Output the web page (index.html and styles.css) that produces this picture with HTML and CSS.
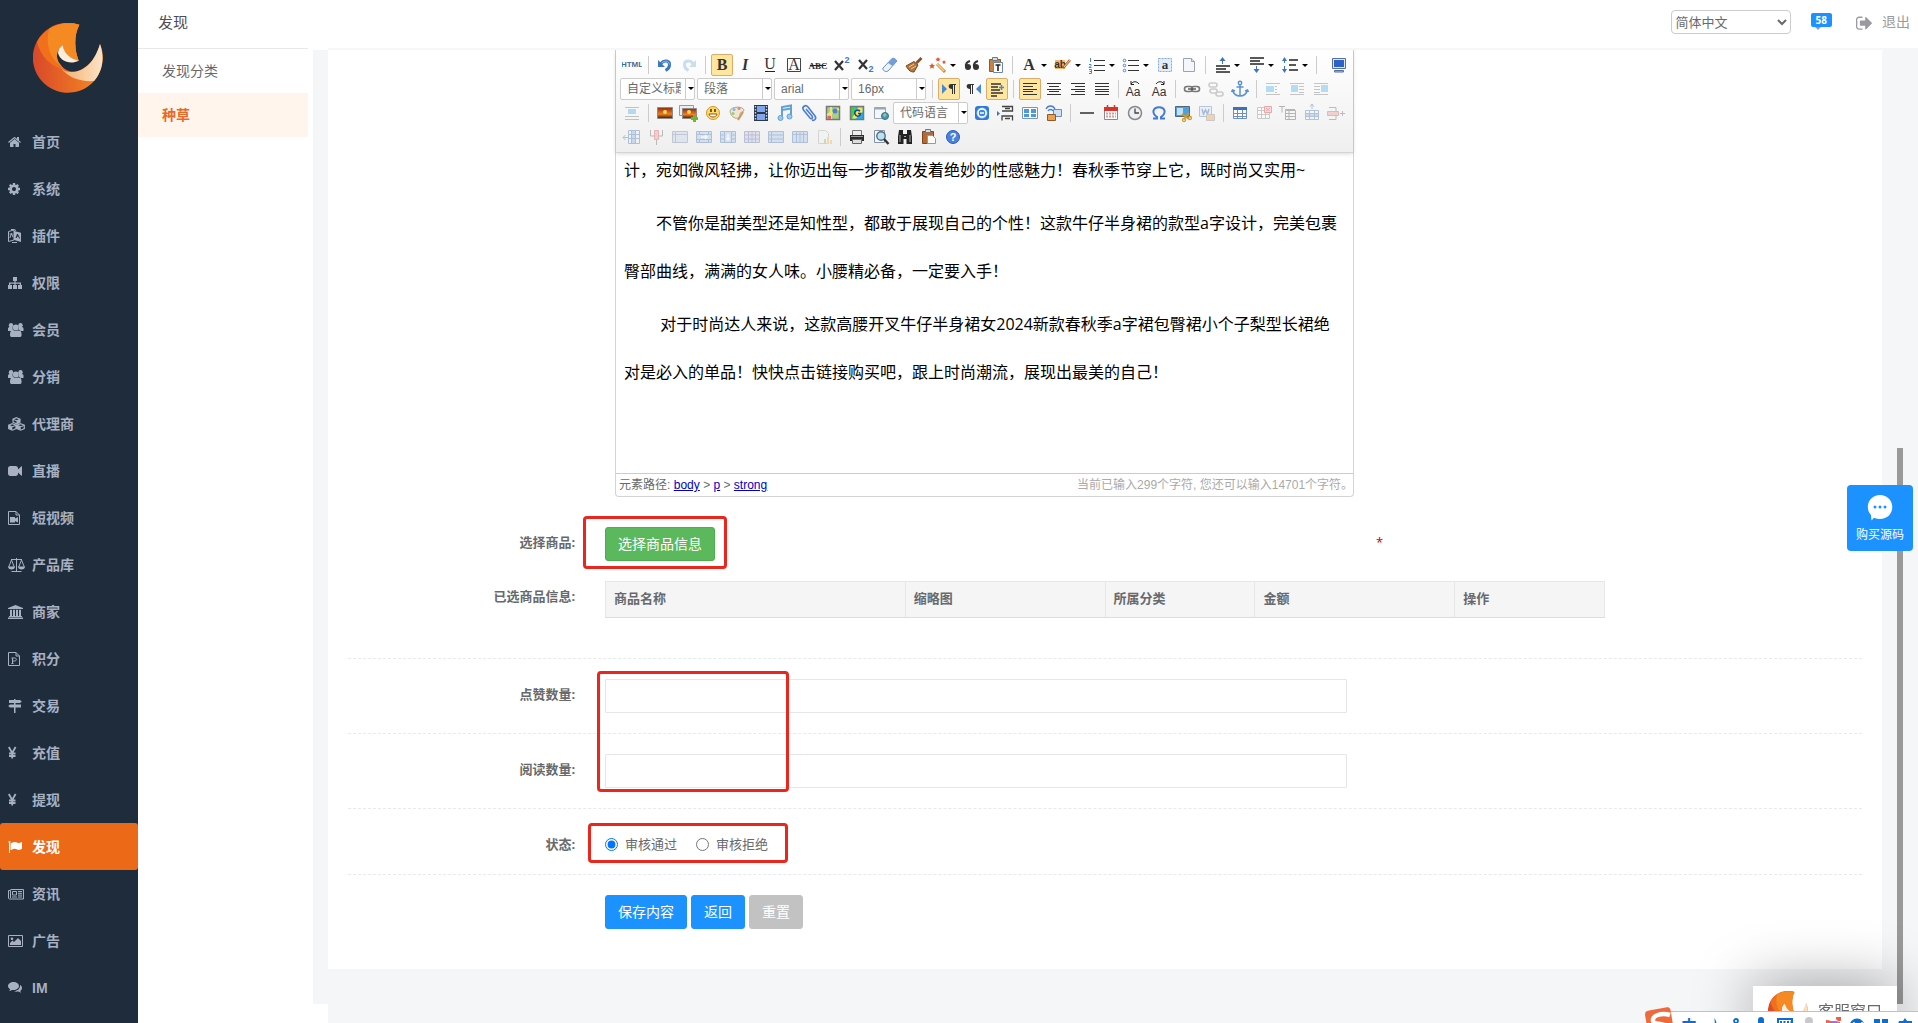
FILE: index.html
```html
<!DOCTYPE html>
<html lang="zh-CN">
<head>
<meta charset="utf-8">
<title>发现</title>
<link rel="stylesheet" href="styles.css">
</head>
<body>
<svg class="defs" aria-hidden="true">
  <defs>
    <linearGradient id="gBase" x1="0" x2="1"><stop offset="0" stop-color="#d9482a"/><stop offset="1" stop-color="#f58a22"/></linearGradient>
    <linearGradient id="gCream" x1="0" x2="1"><stop offset="0" stop-color="#f6b06a"/><stop offset="1" stop-color="#fbe3c8"/></linearGradient>
    <linearGradient id="gPic" x1="0" y1="0" x2="0" y2="1"><stop offset="0" stop-color="#8a2c10"/><stop offset=".6" stop-color="#f0801f"/><stop offset="1" stop-color="#3a1a0c"/></linearGradient>
    <symbol id="logo" viewBox="0 0 70 70">
      <path fill="url(#gBase)" d="M46.3 1.7C41 12 41 26 45.7 37.7 38 36 31 31 29.7 22.3 24 26 22 33 26 40c4 6 10 9 16 9C54 46 64 35 67 21A35 35 0 1 1 46.3 1.7z"/>
      <path fill="#f26f1c" d="M46.3 1.7C41 12 41 26 45.7 37.7 38 36 31 31 29.7 22.3 24 26 22 33 26 40l6 7C18 44 8 34 4 19 12 4 30-3 46.3 1.7z"/>
      <path fill="#f58a22" d="M46.3 1.7C41 12 41 26 45.7 37.7 38 36 31 31 29.7 22.3 24 26 22 33 26 40l3 4C17 36 12 22 16 6 25 0 36-1 46.3 1.7z"/>
      <path fill="url(#gCream)" d="M67 21C62 37 53 49 38 49c-4 0-7-1-10-4 7 10 20 14 33 13 8-9 11-22 6-37z"/>
      <path fill="#fdecd9" d="M29.7 22.3C27 24 25 27 25 30c2 8 12 12 20.7 7.7C38 36 31 31 29.7 22.3z"/>
    </symbol>
    <symbol id="users" viewBox="0 0 16 14"><g fill="currentColor"><circle cx="3" cy="2.200" r="2.200"/><circle cx="12.500" cy="2.200" r="2.200"/><circle cx="7.800" cy="4.500" r="3"/><path d="M0 8V5.500C0 4.500 1 4 2 4h2.500c0 1.800.4 3 1 4zM15.500 8V5.500c0-1-1-1.500-2-1.500H11c0 1.800-.4 3-1 4zM2 12c0-3.500 1-5 3.200-5 1.700 1.400 3.500 1.400 5.200 0 2.200 0 3.200 1.500 3.200 5 0 1.400-.8 2-2 2H4c-1.300 0-2-.6-2-2z"/></g></symbol>
    <symbol id="yen" viewBox="0 0 16 14"><path fill="none" stroke="currentColor" stroke-width="1.800" d="M.8 1l3.400 6 3.400-6M4.200 7v5.500M1 7.500h6.500M1 10h6.500"/></symbol>
  </defs>
</svg>

<div class="app">
  <aside class="sidebar">
    <svg class="logo" role="img" aria-label="logo"><use href="#logo"/></svg>
    <nav class="nav">
      <a href="#"><svg class="fa" viewBox="64 0 1792 1792"><path fill="currentColor" d="M1472 992v480q0 26-19 45t-45 19h-384v-384h-256v384h-384q-26 0-45-19t-19-45v-480q0-1 .5-3t.5-3l575-474 575 474q1 2 1 6zm223-69l-62 74q-8 9-21 11h-3q-13 0-21-7l-692-577-692 577q-12 8-24 7-13-2-21-11l-62-74q-8-10-7-23.500t11-21.500l719-599q32-26 76-26t76 26l244 204v-195q0-14 9-23t23-9h192q14 0 23 9t9 23v408l219 182q10 8 11 21.500t-7 23.500z"/></svg>首页</a>
      <a href="#"><svg class="fa" viewBox="128 0 1792 1792"><path fill="currentColor" d="M1152 896q0-106-75-181t-181-75-181 75-75 181 75 181 181 75 181-75 75-181zm512-109v222q0 12-8 23t-20 13l-185 28q-19 54-39 91 35 50 107 138 10 12 10 25t-9 23q-27 37-99 108t-94 71q-12 0-26-9l-138-108q-44 23-91 38-16 136-29 186-7 28-36 28h-222q-14 0-24.500-8.500t-11.500-21.500l-28-184q-49-16-90-37l-141 107q-10 9-25 9-14 0-25-11-126-114-165-168-7-10-7-23 0-12 8-23 15-21 51-66.500t54-70.500q-27-50-41-99l-183-27q-13-2-21-12.500t-8-23.500v-222q0-12 8-23t19-13l186-28q14-46 39-92-40-57-107-138-10-12-10-24 0-10 9-23 26-36 98.500-107.500t94.500-71.500q13 0 26 10l138 107q44-23 91-38 16-136 29-186 7-28 36-28h222q14 0 24.500 8.500t11.500 21.500l28 184q49 16 90 37l142-107q9-9 24-9 13 0 25 10 129 119 165 170 7 8 7 22 0 12-8 23-15 21-51 66.500t-54 70.500q26 50 41 98l183 28q13 2 21 12.500t8 23.500z"/></svg>系统</a>
      <a href="#"><svg viewBox="0 0 16 14"><path fill="none" stroke="currentColor" d="M.5 2.500L6 1v10L.5 12.500zM1.800 9L3.500 4.500 5 8M1.500 5h3M3 .5h3l2 1M4 13.500h5"/><path fill="currentColor" fill-rule="evenodd" d="M6 2l7 1.700V13L6 11zM7.500 9h1.200l.5-1.500 1.200.3.600 1.700h1.200L9.900 5H9z"/></svg>插件</a>
      <a href="#"><svg viewBox="0 0 16 14"><path fill="currentColor" d="M5 1h4v4H7.600v1.500H13V9h1v4h-4V9h1.700V7.800H7.600V9H9v4H5V9h1.400V7.800H2.300V9H4v4H0V9h1V6.500h5.400V5H5z"/></svg>权限</a>
      <a href="#"><svg><use href="#users"/></svg>会员</a>
      <a href="#"><svg><use href="#users"/></svg>分销</a>
      <a href="#"><svg viewBox="0 0 17 14" class="wide"><g fill="none" stroke="currentColor" stroke-width="1.200"><path d="M8.500 .7L12 2.200v3L8.500 6.800 5 5.200v-3zM5 2.300l3.500 1.400L12 2.300M4.300 6.700L8 8.200v3.300l-3.700 1.700L.7 11.500V8.200zM.7 8.300l3.600 1.400L8 8.300M12.700 6.700l3.600 1.500v3.300l-3.600 1.700L9 11.500V8.200zM9 8.300l3.700 1.400 3.600-1.400"/></g><path fill="currentColor" d="M8.500 3.700L12 2.300v3L8.500 7zM4.300 9.700L.7 8.300v3.200l3.600 1.700zM12.700 9.700L9 8.300v3.200l3.700 1.700z"/></svg>代理商</a>
      <a href="#"><svg class="fa" viewBox="0 0 1792 1792"><path fill="currentColor" d="M1792 352v1088q0 42-39 59-13 5-25 5-27 0-45-19l-403-403v166q0 119-84.500 203.500t-203.500 84.500h-704q-119 0-203.500-84.500t-84.500-203.500v-704q0-119 84.500-203.500t203.500-84.500h704q119 0 203.500 84.500t84.500 203.500v165l403-402q18-19 45-19 12 0 25 5 39 17 39 59z"/></svg>直播</a>
      <a href="#"><svg viewBox="0 0 16 14"><path fill="none" stroke="currentColor" d="M.5.5h7.500l3.500 3.500v9.500H.5zM8 .5V4h3.500"/><path fill="currentColor" d="M2 6h5v1.500L10 6v5.500L7 10v1.500H2z"/></svg>短视频</a>
      <a href="#"><svg viewBox="0 0 17 14" class="wide"><path fill="none" stroke="currentColor" d="M3 1.500h11M8.500 0v13M3.500 13.500h10M3.500 2L.7 9M3.500 2l2.800 7M13.500 2l-2.800 7M13.500 2l2.800 7"/><path fill="currentColor" d="M0 8.500h7c0 2-1.500 3-3.500 3S0 10.500 0 8.500zm10 0h7c0 2-1.500 3-3.500 3S10 10.500 10 8.500z"/></svg>产品库</a>
      <a href="#"><svg viewBox="0 0 16 14"><path fill="currentColor" d="M7.500 0L15 3v1H0V3zM2 4.800h2V11h1V4.800h2V11h1V4.800h2V11h1V4.800h2V11h1v1H1v-1h1zM0 12.500h15V14H0z"/></svg>商家</a>
      <a href="#"><svg viewBox="0 0 16 14"><path fill="none" stroke="currentColor" d="M.5.5h7.500l3.500 3.500v9.500H.5zM8 .5V4h3.500M3.500 11.500h2M4.500 11.500V6M3.500 6h3c2.500 0 2.500 3 0 3h-2"/></svg>积分</a>
      <a href="#"><svg viewBox="0 0 16 14"><path fill="currentColor" d="M6 0h1.500v1H12l1.800 1.500L12 4H1V1h5zM6 4h1.500v1.500H13v3H7.500V14H6V8.500H2L.2 7 2 5.500h4z"/></svg>交易</a>
      <a href="#"><svg><use href="#yen"/></svg>充值</a>
      <a href="#"><svg><use href="#yen"/></svg>提现</a>
      <a href="#" class="active"><svg class="fa" viewBox="0 0 1792 1792"><path fill="currentColor" d="M320 256q0 72-64 110v1266q0 13-9.500 22.500t-22.500 9.500h-64q-13 0-22.500-9.500t-9.500-22.500v-1266q-64-38-64-110 0-53 37.500-90.500t90.500-37.500 90.500 37.500 37.500 90.500zm1472 64v763q0 25-12.500 38.500t-39.500 27.500q-215 116-369 116-61 0-123.500-22t-108.500-48-115.500-48-142.500-22q-192 0-464 146-17 9-33 9-26 0-45-19t-19-45v-742q0-32 31-55 21-14 79-43 236-120 421-120 107 0 200 29t219 88q38 19 88 19 54 0 117.500-21t110-47 88-47 54.500-21q26 0 45 19t19 45z"/></svg>发现</a>
      <a href="#"><svg viewBox="0 0 16 14"><path fill="none" stroke="currentColor" d="M2.500 2.500h13v9.500h-14c-.7 0-1-.5-1-1V3.500h2V11M4.500 4.500h4v3.500h-4zM4 10h5M10 4.500h4M10 6.300h4M10 8.100h4M10 10h4"/></svg>资讯</a>
      <a href="#"><svg viewBox="0 0 16 14"><path fill="none" stroke="currentColor" d="M.5 1.500h14v11H.5z"/><circle cx="4" cy="4.700" r="1.300" fill="currentColor"/><path fill="currentColor" d="M2 11V9l2.500-2.500L6 8l4-4 3 3v4z"/></svg>广告</a>
      <a href="#"><svg viewBox="0 0 16 14"><path fill="currentColor" d="M5.500 1c3 0 5.500 1.800 5.500 4s-2.500 4-5.500 4c-.5 0-1 0-1.500-.1-1 .8-2 1.100-3 1.100.6-.5 1-1 1.100-1.800C.8 7.500 0 6.300 0 5c0-2.200 2.500-4 5.500-4z"/><path fill="currentColor" d="M12 4c1.200.6 2 1.700 2 3 0 1.200-.7 2.200-1.700 2.900.1.800.5 1.300 1 1.800-1 0-2-.4-3-1.100-1.800.3-3.300 0-4.300-.6 3.500 0 6.300-2.200 6-6z"/></svg>IM</a>
    </nav>
  </aside>

  <div class="main">
    <header class="topbar">
      <h1>发现</h1>
      <div class="tools">
        <select class="lang" aria-label="语言"><option>简体中文</option></select>
        <a href="#" class="msg" aria-label="消息"><span>58</span></a>
        <a href="#" class="logout"><svg viewBox="64 0 1664 1664"><path fill="currentColor" d="M704 1440q0 4 1 20t.5 26.500-3 23.500-10 19.500-20.500 6.500h-320q-119 0-203.500-84.500t-84.500-203.500v-704q0-119 84.500-203.500t203.500-84.500h320q13 0 22.500 9.500t9.500 22.500q0 4 1 20t.5 26.500-3 23.500-10 19.500-20.500 6.500h-320q-66 0-113 47t-47 113v704q0 66 47 113t113 47h312l11.500 1 11.500 3 8 5.500 7 9 2 13.500zm928-544q0 26-19 45l-544 544q-19 19-45 19t-45-19-19-45v-288h-448q-26 0-45-19t-19-45v-384q0-26 19-45t45-19h448v-288q0-26 19-45t45-19 45 19l544 544q19 19 19 45z"/></svg>退出</a>
      </div>
    </header>

    <div class="workspace">
      <nav class="subnav">
        <a href="#">发现分类</a>
        <a href="#" class="active">种草</a>
      </nav>
      <div class="gutter"></div>
      <main class="content">
        <form class="card">
          <div class="row row-editor">
            <div class="field">
              <div class="editor">
                <div class="toolbar">
                  <div class="tb-row">
                    <button type="button" aria-label="源代码"><svg viewBox="0 0 20 20"><text x="10" y="12" class="t-html">HTML</text></svg></button>
                    <i class="sep"></i>
                    <button type="button" aria-label="撤销"><svg viewBox="0 0 20 20"><path fill="none" stroke="#3c78c0" stroke-width="3" d="M6 8.500c3-4 9-3 8.500 1.500 0 2-1 4-4 5.500"/><path fill="#3c78c0" d="M3 5v7h7z"/><path fill="none" stroke="#8fc0ee" d="M7 8c3-3 7-2 7.500 1.500"/></svg></button>
                    <button type="button" class="off" aria-label="重做"><svg viewBox="0 0 20 20"><path fill="none" stroke="#7fb0dc" stroke-width="3" d="M14 8.500c-3-4-9-3-8.500 1.500 0 2 1 4 4 5.500"/><path fill="#7fb0dc" d="M17 5v7h-7z"/></svg></button>
                    <i class="sep"></i>
                    <button type="button" class="on" aria-label="加粗"><svg viewBox="0 0 20 20"><text x="10" y="15" class="t-serif bold">B</text></svg></button>
                    <button type="button" aria-label="斜体"><svg viewBox="0 0 20 20"><text x="9" y="15" class="t-serif bold italic">I</text></svg></button>
                    <button type="button" aria-label="下划线"><svg viewBox="0 0 20 20"><text x="10" y="14" class="t-serif">U</text><path stroke="#222" d="M5 16.500h10"/></svg></button>
                    <button type="button" aria-label="字符边框"><svg viewBox="0 0 20 20"><path fill="none" stroke="#444" d="M3.500 3.500h13v13h-13z"/><text x="10" y="15" class="t-serif">A</text></svg></button>
                    <button type="button" aria-label="删除线"><svg viewBox="0 0 20 20"><text x="10" y="14" class="t-abc">ABC</text><path stroke="#222" d="M2 10.500h16"/></svg></button>
                    <button type="button" aria-label="上标"><svg viewBox="0 0 20 20"><path stroke="#333" stroke-width="2.200" d="M3 6l8 9M11 6l-8 9"/><text x="15" y="8" class="t-sup">2</text></svg></button>
                    <button type="button" aria-label="下标"><svg viewBox="0 0 20 20"><path stroke="#333" stroke-width="2.200" d="M3 5l8 9M11 5l-8 9"/><text x="15" y="17" class="t-sup">2</text></svg></button>
                    <button type="button" aria-label="清除格式"><svg viewBox="0 0 20 20"><path fill="#eaf3fc" stroke="#6d8db8" d="M3 13L12 3.500c1-1 4 .5 5 2.500L8 16c-2 1.500-6-.5-5-3z"/><path fill="#6f9edb" d="M8 8l4-4.500c1-1 4 .5 5 2.500l-4.500 5z"/></svg></button>
                    <button type="button" aria-label="格式刷"><svg viewBox="0 0 20 20"><path stroke="#8a4d24" stroke-width="2.600" d="M17.500 3l-5 5"/><path fill="#b5763c" stroke="#7c4a22" d="M2 11l8-4.500L14 10l-4 7c-3 0-5-1-8-6z"/><path stroke="#f1cc91" d="M5 12l5-3M7 14l5-3"/></svg></button>
                    <button type="button" class="split" aria-label="自动排版"><svg viewBox="0 0 20 20"><path stroke="#c98a3a" stroke-width="3" d="M17 17l-8-8"/><path stroke="#f7d08a" stroke-width="1.400" d="M16 16L9 9"/><g fill="#e0562c"><path d="M4 8l1 2 2 .2-1.500 1.400.5 2.200-2-1.200-2 1.200.5-2.200L1 10.200l2-.2zM10 2l.8 1.500 1.700.2-1.200 1.200.3 1.700L10 5.800l-1.600.8.3-1.700-1.200-1.200 1.700-.2zM16 5l.6 1.300 1.400.2-1 1 .2 1.500-1.200-.7-1.200.7.2-1.500-1-1 1.400-.2z"/></g></svg></button>
                    <button type="button" aria-label="引用"><svg viewBox="0 0 20 20"><g fill="#333"><circle cx="6" cy="12" r="3"/><circle cx="14" cy="12" r="3"/></g><path fill="none" stroke="#333" stroke-width="2" d="M4 12c-.5-3 .5-5 4-6M12 12c-.5-3 .5-5 4-6"/></svg></button>
                    <button type="button" aria-label="纯文本粘贴模式"><svg viewBox="0 0 20 20"><path fill="#c58445" stroke="#8d5a2a" d="M3.500 4.500h11v12h-11z"/><path fill="#ddd" stroke="#777" d="M6.500 2.500h5v3h-5z"/><path fill="#fff" stroke="#6a87ab" d="M7.500 7.500h9v10h-9z"/><path stroke="#222" stroke-width="1.600" d="M9.500 10h5M12 10v6"/></svg></button>
                    <i class="sep"></i>
                    <button type="button" class="split" aria-label="字体颜色"><svg viewBox="0 0 20 20"><text x="10" y="15" class="t-serif bold">A</text></svg></button>
                    <button type="button" class="split" aria-label="背景色"><svg viewBox="0 0 20 20"><path fill="#fbb767" d="M2 5h10v9H2z"/><text x="7" y="13" class="t-ab">ab</text><path stroke="#b3582a" stroke-width="2.600" d="M17 5l-7 8"/><path stroke="#f8d58c" d="M17 5l-6 7"/></svg></button>
                    <button type="button" class="split" aria-label="有序列表"><svg viewBox="0 0 20 20"><path stroke="#333" d="M7 5.500h11M7 10.500h11M7 15.500h11"/><path fill="none" stroke="#4a86d0" d="M3.500 3v4M2 9.500h2v1L2 12.500h2.500M2 14.500h2.500v4H2M2.500 16.500h2"/></svg></button>
                    <button type="button" class="split" aria-label="无序列表"><svg viewBox="0 0 20 20"><path stroke="#333" d="M7 5.500h11M7 10.500h11M7 15.500h11"/><g fill="none" stroke="#4a86d0"><circle cx="3.500" cy="5.500" r="1.300"/><circle cx="3.500" cy="10.500" r="1.300"/><circle cx="3.500" cy="15.500" r="1.300"/></g></svg></button>
                    <button type="button" aria-label="全选"><svg viewBox="0 0 20 20"><path fill="#e3eefb" stroke="#7eaae2" stroke-dasharray="2 1" d="M3.500 3.500h13v13h-13z"/><text x="10" y="14" class="t-a">a</text></svg></button>
                    <button type="button" aria-label="清空文档"><svg viewBox="0 0 20 20"><path fill="#f4f6f9" stroke="#98a3b3" d="M4.500 3.500h8l3 3v10h-11z"/><path fill="#d5dbe4" stroke="#98a3b3" d="M12.500 3.500v3h3"/></svg></button>
                    <i class="sep"></i>
                    <button type="button" class="split" aria-label="段前距"><svg viewBox="0 0 20 20"><path stroke="#222" stroke-width="1.400" d="M4 11h14M4 14h10M4 17h14"/><path stroke="#3f74c4" d="M10.500 9V4"/><path fill="#3f74c4" d="M7.500 6l3-4 3 4z"/></svg></button>
                    <button type="button" class="split" aria-label="段后距"><svg viewBox="0 0 20 20"><path stroke="#222" stroke-width="1.400" d="M4 3h14M4 6h10M4 9h14"/><path stroke="#3f74c4" d="M10.500 11v4"/><path fill="#3f74c4" d="M7.500 14l3 4 3-4z"/></svg></button>
                    <button type="button" class="split" aria-label="行间距"><svg viewBox="0 0 20 20"><path stroke="#222" stroke-width="1.400" d="M9 5h9M9 10h7M9 15h9"/><path stroke="#3f74c4" stroke-dasharray="4 3" d="M4.500 4v13"/><path fill="#3f74c4" d="M2 6l2.500-4L7 6zM2 14l2.500 4L7 14z"/></svg></button>
                    <i class="sep"></i>
                    <button type="button" class="last" aria-label="全屏"><svg viewBox="0 0 20 20"><path fill="#dfe8f5" stroke="#55709c" d="M3.500 3.500h13v10h-13z"/><path fill="#2e62c8" d="M5 5h10v7H5z"/><path fill="#b8c4d6" stroke="#55709c" d="M5.500 15.500h9v1.500h-9z"/></svg></button>
                  </div>
                  <div class="tb-row">
                    <span class="combo"><select aria-label="自定义标题"><option>自定义标题</option></select></span>
                    <span class="combo"><select aria-label="段落格式"><option>段落</option></select></span>
                    <span class="combo"><select aria-label="字体"><option>arial</option></select></span>
                    <span class="combo"><select aria-label="字号"><option>16px</option></select></span>
                    <i class="sep"></i>
                    <button type="button" class="on" aria-label="从左向右输入"><svg viewBox="0 0 20 20"><path fill="#4a86d8" d="M3 5l5 5-5 5z"/><path fill="#333" d="M17 5v1h-1v9h-1V6h-1v9h-1v-5C9 10 8.500 5 12 5z"/></svg></button>
                    <button type="button" aria-label="从右向左输入"><svg viewBox="0 0 20 20"><path fill="#4a86d8" d="M18 5l-5 5 5 5z"/><path fill="#333" d="M11 5v1h-1v9H9V6H8v9H7v-5C3 10 2.500 5 6 5z"/></svg></button>
                    <button type="button" class="on" aria-label="首行缩进"><svg viewBox="0 0 20 20"><path stroke="#333" stroke-width="1.500" d="M4 5h10M4 8h7M4 11h9M4 14h12M4 17h6"/><path stroke="#4a86d8" stroke-width="1.500" d="M12 8.500h5M14.500 6v5"/></svg></button>
                    <i class="sep"></i>
                    <button type="button" class="on" aria-label="居左对齐"><svg viewBox="0 0 20 20"><path stroke="#333" d="M3 4.500h14M3 7.500h10M3 10.500h14M3 12.500h10M3 15.500h14"/></svg></button>
                    <button type="button" aria-label="居中对齐"><svg viewBox="0 0 20 20"><path stroke="#333" d="M3 4.500h14M5 7.500h10M3 10.500h14M5 12.500h10M3 15.500h14"/></svg></button>
                    <button type="button" aria-label="居右对齐"><svg viewBox="0 0 20 20"><path stroke="#333" d="M3 4.500h14M7 7.500h10M3 10.500h14M7 12.500h10M3 15.500h14"/></svg></button>
                    <button type="button" aria-label="两端对齐"><svg viewBox="0 0 20 20"><path stroke="#333" d="M3 4.500h14M3 7.500h14M3 10.500h14M3 12.500h14M3 15.500h14"/></svg></button>
                    <i class="sep"></i>
                    <button type="button" aria-label="字母大写"><svg viewBox="0 0 20 20"><text x="8" y="17" class="t-case">Aa</text><path fill="none" stroke="#222" d="M6 5c2-3 6-3 8 0M6 2v3.500h3"/></svg></button>
                    <button type="button" aria-label="字母小写"><svg viewBox="0 0 20 20"><text x="10" y="17" class="t-case">Aa</text><path fill="none" stroke="#222" d="M7 5c2-3 6-3 8 0M15 2v3.500h-3"/></svg></button>
                    <i class="sep"></i>
                    <button type="button" aria-label="超链接"><svg viewBox="0 0 20 20"><g fill="none" stroke="#777" stroke-width="1.600"><rect x="2.500" y="7.500" width="8" height="5" rx="2.500"/><rect x="9.500" y="7.500" width="8" height="5" rx="2.500"/></g><path stroke="#555" stroke-width="1.400" d="M6 10h8"/></svg></button>
                    <button type="button" class="off" aria-label="取消链接"><svg viewBox="0 0 20 20"><g fill="none" stroke="#888" stroke-width="1.600"><rect x="3" y="4" width="8" height="4" rx="2"/><rect x="4" y="10" width="7" height="4" rx="2"/><rect x="10" y="13" width="7" height="4" rx="2"/></g></svg></button>
                    <button type="button" aria-label="锚点"><svg viewBox="0 0 20 20"><g fill="none" stroke="#5c93cf" stroke-width="1.500"><circle cx="10" cy="4" r="1.700"/><path d="M10 6v11M6.500 8h7M2.500 11c1 4 3 6 7.500 6s6.500-2 7.500-6M1.500 13l1-2 2.500 1M18.500 13l-1-2-2.500 1"/></g></svg></button>
                    <i class="sep"></i>
                    <button type="button" class="off" aria-label="左浮动"><svg viewBox="0 0 20 20"><path fill="#4bb4ee" d="M3 7h8v6H3z"/><path stroke="#777" d="M3 4.500h14M12 7.500h2M12 10.500h2M12 13.500h2M3 15.500h14"/></svg></button>
                    <button type="button" class="off" aria-label="居中"><svg viewBox="0 0 20 20"><path fill="#4bb4ee" d="M4 6h7v7H4z"/><path stroke="#777" d="M3 4.500h14M12 7.500h5M12 10.500h5M12 13.500h5M3 15.500h14"/></svg></button>
                    <button type="button" class="off" aria-label="右浮动"><svg viewBox="0 0 20 20"><path fill="#4bb4ee" d="M10 6h7v7h-7z"/><path stroke="#777" d="M3 4.500h14M3 7.500h6M3 10.500h6M3 13.500h6M3 15.500h14"/></svg></button>
                  </div>
                  <div class="tb-row">
                    <button type="button" class="off" aria-label="默认"><svg viewBox="0 0 20 20"><path fill="#4bb4ee" d="M6 6h8v5H6z"/><path stroke="#777" d="M3 4.500h14M3 13.500h14M3 16.500h14"/></svg></button>
                    <i class="sep"></i>
                    <button type="button" aria-label="单图上传"><svg viewBox="0 0 20 20"><path fill="url(#gPic)" stroke="#8b8b8b" d="M2.500 4.500h15v11h-15z"/><circle cx="10" cy="9" r="2" fill="#ffd45a"/></svg></button>
                    <button type="button" aria-label="多图上传"><svg viewBox="0 0 20 20"><path fill="#eee" stroke="#999" d="M.5 2.500h14v10H.5z"/><path fill="url(#gPic)" stroke="#8b8b8b" d="M3.500 5.500h14v10h-14z"/><circle cx="10" cy="9" r="2" fill="#ffd45a"/><path stroke="#6cba2c" stroke-width="3" d="M12 15.500h7M15.500 12v7"/></svg></button>
                    <button type="button" aria-label="表情"><svg viewBox="0 0 20 20"><circle cx="10" cy="10" r="6.500" fill="#ffd96a" stroke="#d9952b"/><path fill="#fff" stroke="#8a5a14" d="M6 11h8c-.5 4-7.500 4-8 0z"/><path stroke="#5a3a0c" stroke-width="1.600" d="M8 6v3M12 6v3"/></svg></button>
                    <button type="button" aria-label="涂鸦"><svg viewBox="0 0 20 20"><path fill="#efe6d4" stroke="#b8a78a" d="M3 8c1-5 13-5 14-1 0 3-4 1-4 4s-2 5-5 4-5-4-5-7z"/><circle cx="7" cy="6.500" r="1.500" fill="#84b6e0"/><circle cx="12" cy="5.500" r="1.500" fill="#d88"/><circle cx="6" cy="10.500" r="1.500" fill="#9c6"/><path stroke="#c79a62" stroke-width="2" d="M16 9l-5 8"/></svg></button>
                    <button type="button" aria-label="视频"><svg viewBox="0 0 20 20"><path fill="#2b3650" d="M3 2h14v16H3z"/><path fill="#7fa6e8" d="M6 3h8v6H6zM6 11h8v6H6z"/><path stroke="#ccd6ea" stroke-width="1.400" stroke-dasharray="1.500 1.500" d="M4.500 3v14M15.500 3v14"/></svg></button>
                    <button type="button" aria-label="音乐"><svg viewBox="0 0 20 20"><path fill="none" stroke="#62a0d8" stroke-width="2" d="M7 15V4l9-1.500V13M7 7l9-1.500"/><circle cx="5.500" cy="15" r="2.500" fill="#9cc8ee" stroke="#62a0d8"/><circle cx="14.500" cy="13.500" r="2.500" fill="#9cc8ee" stroke="#62a0d8"/></svg></button>
                    <button type="button" aria-label="附件"><svg viewBox="0 0 20 20"><path fill="none" stroke="#4a7ed6" stroke-width="1.600" d="M7 6l6 7c1.500 2-.5 3.500-2 2L4.500 7c-2-3 2-6 4.500-3l7 9c2 3-1 5-3 4"/></svg></button>
                    <button type="button" aria-label="百度地图"><svg viewBox="0 0 20 20"><path fill="#a7cf8a" stroke="#777" stroke-width="1.500" d="M3.500 3.500h13v13h-13z"/><path stroke="#f3e27a" stroke-width="2" d="M4 12l12-6M8 4v12"/><circle cx="12" cy="8" r="2.500" fill="#4f83c8"/><path fill="#d66" d="M5 13h3v3H5z"/></svg></button>
                    <button type="button" aria-label="谷歌地图"><svg viewBox="0 0 20 20"><path fill="#1fb0f5" stroke="#777" stroke-width="1.500" d="M3.500 3.500h13v13h-13z"/><path fill="#3fcf4a" d="M4.500 4.500H9V15.500H4.500z"/><path fill="#ffe14a" d="M11 4.500h4.500V9L9 15.500H5z"/><path fill="none" stroke="#0f4fa0" stroke-width="1.600" d="M13 8c-3-2-6 0-5 3s5 3 5.500-.5H11"/></svg></button>
                    <button type="button" aria-label="插入框架"><svg viewBox="0 0 20 20"><path fill="#f3f6fa" stroke="#9aa6b8" d="M3.500 4.500h11v11h-11z"/><path stroke="#9aa6b8" stroke-width="2" d="M4 5.500h10"/><circle cx="14" cy="13" r="3.500" fill="#4c97b8" stroke="#35728e"/><path fill="#8bd19a" d="M12 12l2-2 1.500 2-2 2z"/></svg></button>
                    <span class="combo"><select aria-label="代码语言"><option>代码语言</option></select></span>
                    <button type="button" aria-label="百度应用"><svg viewBox="0 0 20 20"><rect x="3" y="3" width="14" height="14" rx="3" fill="#2f78d6"/><circle cx="10" cy="10" r="5.500" fill="#8cc6f6"/><circle cx="10" cy="10" r="4" fill="#3d88e0" stroke="#fff" stroke-width="1.500"/><path stroke="#fff" stroke-width="1.500" d="M8 10h4"/></svg></button>
                    <button type="button" aria-label="分页"><svg viewBox="0 0 20 20"><path fill="none" stroke="#444" stroke-width="1.300" d="M6 3.500h10.500V8H6M6 17.500V13h10.500v4.500M9 5.500h5M9 15.500h5"/><path fill="#3f74c4" d="M1 8l3 2.500L1 13z"/></svg></button>
                    <button type="button" aria-label="模板"><svg viewBox="0 0 20 20"><path fill="#fff" stroke="#7f95b5" d="M2.500 4.500h15v11h-15z"/><path fill="#4e9ad8" d="M4 6h5v4H4zM11 6h5v4h-5zM4 11h5v3H4zM11 11h5v3h-5z"/></svg></button>
                    <button type="button" aria-label="背景"><svg viewBox="0 0 20 20"><path fill="none" stroke="#4a7fd0" stroke-width="1.300" d="M2 6c2-4 7-4 9 0M4 8c1-2 4-2 5 0"/><path fill="#cfe0f5" stroke="#6f8db8" d="M9.500 6.500h8v7h-8z"/><path fill="#f0a048" stroke="#8a5a30" d="M3.500 11.500h8v6h-8z"/></svg></button>
                    <i class="sep"></i>
                    <button type="button" aria-label="分隔线"><svg viewBox="0 0 20 20"><path stroke="#222" stroke-width="1.400" d="M3 10h14"/></svg></button>
                    <button type="button" aria-label="日期"><svg viewBox="0 0 20 20"><path fill="#fff" stroke="#888" d="M3.500 4.500h13v12h-13z"/><path fill="#d8342c" d="M3 4h14v4H3z"/><path stroke="#d8342c" stroke-width="1.500" d="M6.500 2v4M13.500 2v4"/><path stroke="#d89a9a" stroke-dasharray="2 1" stroke-width="2" d="M5 10.500h10M5 13.500h10"/></svg></button>
                    <button type="button" aria-label="时间"><svg viewBox="0 0 20 20"><circle cx="10" cy="10" r="6.500" fill="#eceff3" stroke="#888" stroke-width="1.500"/><path fill="none" stroke="#444" stroke-width="1.300" d="M10 5.500V10h4"/></svg></button>
                    <button type="button" aria-label="特殊字符"><svg viewBox="0 0 20 20"><path fill="none" stroke="#3f7ad6" stroke-width="2" d="M4 15.500h4v-1.500C5 12 4 10 4.500 7.500 6 3 14 3 15.500 7.500 16 10 15 12 12 14v1.500h4"/></svg></button>
                    <button type="button" aria-label="截图"><svg viewBox="0 0 20 20"><path fill="#4ea0dc" stroke="#567" d="M2.500 3.500h14v10h-14z"/><path fill="#bfe2f7" d="M4 5h6v7H4z"/><path stroke="#d39a26" stroke-width="1.800" d="M9 11l7 5M16 10l-5 6"/><g fill="none" stroke="#d39a26" stroke-width="1.300"><circle cx="17" cy="15" r="1.500"/><circle cx="11" cy="17" r="1.500"/></g></svg></button>
                    <button type="button" class="off" aria-label="图片转存"><svg viewBox="0 0 20 20"><path fill="#dce8f6" stroke="#5580b8" d="M2.500 3.500h12v10h-12z"/><path fill="none" stroke="#2f62b0" stroke-width="1.500" d="M5 6l1.500 5L8.500 7l2 4L12 6"/><path fill="#f0a048" stroke="#888" d="M9.500 11.500h8v6h-8z"/></svg></button>
                    <i class="sep"></i>
                    <button type="button" aria-label="插入表格"><svg viewBox="0 0 20 20"><path fill="#fff" stroke="#6d8fc4" d="M3.500 4.500h13v11h-13zM3.500 10.500h13M3.500 13.500h13M7.500 7v9M12.500 7v9"/><path fill="#3c6fbd" d="M3 4h14v3H3z"/></svg></button>
                    <button type="button" class="off" aria-label="删除表格"><svg viewBox="0 0 20 20"><path fill="#fff" stroke="#888" d="M3.500 4.500h12v11h-12zM3.500 7.500h12M3.500 11.500h12M7.500 4.500v11M11.500 4.500v11"/><path fill="#fbd" stroke="#d33" d="M10.500 3.500h7v6h-7z"/><path stroke="#d33" d="M12 5l4 3M16 5l-4 3"/></svg></button>
                    <button type="button" class="off" aria-label="表格前插入行"><svg viewBox="0 0 20 20"><path fill="none" stroke="#555" d="M1 3.500h6M4 3.500v6M7.500 7.500h10v9h-10zM7.500 10.500h10M7.500 13.500h10M11 7.500v9M7 6.500h10"/></svg></button>
                    <button type="button" class="off" aria-label="前插入行"><svg viewBox="0 0 20 20"><path fill="#8db4ea" d="M3 10h14v3H3z"/><path fill="none" stroke="#4c77b4" d="M3.500 7.500h13v9h-13zM3.500 10.500h13M3.500 13.500h13M7.500 7v9M12.500 7v9M10 1v5M8 3.500L10 1l2 2.500"/></svg></button>
                    <button type="button" class="off" aria-label="删除行"><svg viewBox="0 0 20 20"><path fill="#f19a9a" stroke="#d55" d="M1.500 8.500h11v4h-11z"/><path fill="none" stroke="#666" d="M3 4.500h7v4M3 16.500h7v-4M14 10.500h5M16.500 8v5"/></svg></button>
                  </div>
                  <div class="tb-row">
                    <button type="button" class="off" aria-label="前插入列"><svg viewBox="0 0 20 20"><path fill="#8db4ea" d="M9 4h4v12H9z"/><path fill="none" stroke="#4c77b4" d="M6.500 3.500h11v13h-11zM9.500 3.500v13M13.500 3.500v13M6.500 7.500h11M6.500 11.500h11M6 10.500H1M3.500 8L1 10.500 3.500 13"/></svg></button>
                    <button type="button" class="off" aria-label="删除列"><svg viewBox="0 0 20 20"><path fill="#f19a9a" stroke="#d55" d="M8.500 3.500h4v9h-4z"/><path fill="none" stroke="#666" d="M4.500 3v6h4M16.500 3v6h-4M10.500 13v5"/></svg></button>
                    <button type="button" class="off" aria-label="合并多个单元格"><svg viewBox="0 0 20 20"><path fill="#c3d4ee" stroke="#7d86a8" d="M2.500 4.500h15v11h-15zM2.500 7.500h15M5.500 4.500v11"/></svg></button>
                    <button type="button" class="off" aria-label="右合并单元格"><svg viewBox="0 0 20 20"><path fill="#a9c8f0" stroke="#4c77b4" d="M2.500 4.500h15v11h-15zM2.500 7.500h15M2.500 12.500h15M5.500 4.500v3M5.500 12.500v3M14.500 4.500v3M14.500 12.500v3"/><path stroke="#fff" stroke-width="1.500" d="M7 10h6M11 8l2 2-2 2"/></svg></button>
                    <button type="button" class="off" aria-label="下合并单元格"><svg viewBox="0 0 20 20"><path fill="#a9c8f0" stroke="#4c77b4" d="M2.500 4.500h15v11h-15zM6.500 4.500v11M13.500 4.500v11M2.500 8h4M2.500 12h4M13.500 8h4M13.500 12h4"/><path stroke="#fff" stroke-width="1.500" d="M10 7v6M8 11l2 2 2-2"/></svg></button>
                    <button type="button" class="off" aria-label="拆分单元格"><svg viewBox="0 0 20 20"><path fill="#c3c9ea" stroke="#6d76a8" d="M2.500 4.500h15v11h-15zM2.500 8h15M2.500 12h15M6.500 4.500v11M10 4.500v11M13.500 4.500v11"/></svg></button>
                    <button type="button" class="off" aria-label="拆分成行"><svg viewBox="0 0 20 20"><path fill="#a9c8f0" stroke="#4c77b4" d="M2.500 4.500h15v11h-15zM2.500 8h15M2.500 12h15M5.500 4.500v11"/></svg></button>
                    <button type="button" class="off" aria-label="拆分成列"><svg viewBox="0 0 20 20"><path fill="#a9c8f0" stroke="#4c77b4" d="M2.500 4.500h15v11h-15zM6.500 4.500v11M10 4.500v11M13.500 4.500v11M2.500 7.500h15"/></svg></button>
                    <button type="button" class="off" aria-label="图表"><svg viewBox="0 0 20 20"><path fill="#f4f4f4" stroke="#aaa" d="M4.500 3.500h7l3 3v10h-10z"/><path fill="#8ac05a" d="M10 12h2v5h-2z"/><path fill="#f0b648" d="M13 10h2v7h-2zM16 13h2v4h-2z"/></svg></button>
                    <i class="sep"></i>
                    <button type="button" aria-label="打印"><svg viewBox="0 0 20 20"><path fill="#eee" stroke="#777" d="M5.500 3.500h9v5h-9z"/><path fill="#2c2c2c" d="M3 8h14v6H3z"/><path fill="#ddd" stroke="#666" d="M5.500 12.500h9v4h-9z"/><path stroke="#999" d="M4 9.500h12"/></svg></button>
                    <button type="button" aria-label="预览"><svg viewBox="0 0 20 20"><path fill="#f6f8fb" stroke="#8794a8" d="M3.500 3.500h10v12h-10z"/><circle cx="10" cy="9" r="4.200" fill="#bfe0ee" stroke="#4d6f86" stroke-width="1.400"/><path stroke="#333" stroke-width="2.400" d="M13 12l4.500 5"/></svg></button>
                    <button type="button" aria-label="查询替换"><svg viewBox="0 0 20 20"><path fill="#222" d="M4 3h4v4h4V3h4l1 7v7h-5.500v-5h-3v5H3v-7z"/><path stroke="#aaa" d="M5 8v7M15 8v7M9 9.500h2"/></svg></button>
                    <button type="button" aria-label="粘贴"><svg viewBox="0 0 20 20"><path fill="#b56a34" stroke="#80471e" d="M3.500 4.500h11v12h-11z"/><path fill="#ddd" stroke="#777" d="M6.500 2.500h5v3h-5z"/><path fill="#fff" stroke="#999" d="M8.500 8.500h5l3 3v5h-8z"/></svg></button>
                    <button type="button" aria-label="帮助"><svg viewBox="0 0 20 20"><circle cx="10" cy="10" r="6.500" fill="#4a7fdc" stroke="#2c5fc0"/><text x="10" y="14" class="t-help">?</text></svg></button>
                  </div>
                </div>
                <div class="editor-body">
                  <div class="doc">
                    <p>计，宛如微风轻拂，让你迈出每一步都散发着绝妙的性感魅力！春秋季节穿上它，既时尚又实用~</p>
                    <p class="indent">不管你是甜美型还是知性型，都敢于展现自己的个性！这款牛仔半身裙的款型a字设计，完美包裹臀部曲线，满满的女人味。小腰精必备，一定要入手！</p>
                    <p class="indent">&nbsp;对于时尚达人来说，这款高腰开叉牛仔半身裙女2024新款春秋季a字裙包臀裙小个子梨型长裙绝对是必入的单品！快快点击链接购买吧，跟上时尚潮流，展现出最美的自己！</p>
                  </div>
                </div>
                <div class="statusbar">
                  <span>元素路径: <a href="#">body</a> &gt; <a href="#">p</a> &gt; <a href="#">strong</a></span>
                  <span class="count">当前已输入299个字符, 您还可以输入14701个字符。</span>
                </div>
              </div>
            </div>
          </div>

          <div class="row">
            <label class="label" for="pick">选择商品:</label>
            <div class="field pick-field">
              <button type="button" id="pick" class="btn btn-green">选择商品信息</button>
              <span class="required">*</span>
              <span class="mark mark-pick"></span>
            </div>
          </div>

          <div class="row">
            <span class="label" id="picked">已选商品信息:</span>
            <div class="field">
              <table class="goods" aria-labelledby="picked">
                <thead><tr><th class="w6">商品名称</th><th class="w4">缩略图</th><th class="w3">所属分类</th><th class="w4">金额</th><th class="w3">操作</th></tr></thead>
              </table>
            </div>
          </div>
          <hr class="tall">

          <div class="row">
            <label class="label" for="likes">点赞数量:</label>
            <div class="field"><input type="text" id="likes" class="text"><span class="mark mark-counts"></span></div>
          </div>
          <hr>
          <div class="row">
            <label class="label" for="reads">阅读数量:</label>
            <div class="field"><input type="text" id="reads" class="text"></div>
          </div>
          <hr>
          <div class="row">
            <span class="label" id="state">状态:</span>
            <div class="field radios" role="radiogroup" aria-labelledby="state">
              <label><input type="radio" name="state" checked>审核通过</label>
              <label><input type="radio" name="state">审核拒绝</label>
              <span class="mark mark-state"></span>
            </div>
          </div>
          <hr>
          <div class="row">
            <div class="field actions">
              <button type="button" class="btn btn-blue">保存内容</button>
              <button type="button" class="btn btn-blue">返回</button>
              <button type="button" class="btn btn-gray">重置</button>
            </div>
          </div>
        </form>
      </main>
    </div>
  </div>
</div>

<div class="scroll-thumb"></div>
<a href="#" class="buy">
  <svg viewBox="0 0 26 26"><path fill="#fff" d="M13 0c7 0 12.300 5 12.300 12S20 24 13 24c-2 0-4-.5-6-1.300L4.500 25.500 4 20C2 18 .8 15 .8 12 .8 5 6 0 13 0z"/><g fill="#1b92ff"><circle cx="8" cy="12" r="1.500"/><circle cx="13" cy="12" r="1.500"/><circle cx="18" cy="12" r="1.500"/></g></svg>
  购买源码
</a>
<div class="chat"><svg><use href="#logo"/></svg>客服窗口</div>
<div class="ime">
  <svg class="ime-logo" viewBox="0 0 30 30"><path fill="#ee6a3c" d="M1 8c0-3 1-4 4-4.500L23 .3c2-.3 3 .5 3.500 2.500L31 30H5z"/><path fill="none" stroke="#fff" stroke-width="4.500" d="M26 8C17 5 8 9 9 14c1 4 14 2 16 7"/></svg>
  <span class="ime-lang">中</span>
  <svg viewBox="0 0 16 16"><path fill="#0a6fd0" d="M9 1c5 5 2 13-5 12 5-3 7-7 5-12z"/></svg>
  <svg viewBox="0 0 16 16"><circle cx="7" cy="4" r="2" fill="none" stroke="#0a6fd0" stroke-width="1.800"/><path fill="#0a6fd0" d="M8 9h4v4H8z"/></svg>
  <svg viewBox="0 0 16 16"><rect x="5" y="0" width="6" height="11" rx="3" fill="#0a6fd0"/></svg>
  <svg viewBox="0 0 16 16"><path fill="none" stroke="#0a6fd0" stroke-width="2" d="M1 2h14v11H1z"/><path stroke="#0a6fd0" stroke-width="2" stroke-dasharray="2 1.500" d="M3 5h11M3 8h11"/></svg>
  <svg viewBox="0 0 16 16"><circle cx="8" cy="4" r="4" fill="#c8c8cc"/><path fill="#c8c8cc" d="M1 16c0-9 14-9 14 0z"/></svg>
  <svg viewBox="0 0 16 16"><path fill="#b567d8" d="M1 3l5 1h5l4 1v11H1z"/><path fill="#f0644a" d="M1 3l5 1-2 8H1z"/><circle cx="14" cy="1" r="3" fill="#f65a3c"/></svg>
  <svg viewBox="0 0 16 16"><circle cx="8" cy="9" r="7.500" fill="#0a6fd0"/><path stroke="#fff" stroke-width="1.500" d="M3 7h4M5 5v4M10 8h2M12 6h2"/></svg>
  <svg viewBox="0 0 16 16"><path fill="#0a6fd0" d="M1 2h6v6H1zM9 2h6v6H9zM1 10h6v6H1zM9 10h6v6H9z"/></svg>
  <svg viewBox="0 0 16 16"><path fill="#0a6fd0" d="M8 1l2 3h5v4l1 2-2 6H2L0 10l2-6h4z"/><circle cx="8" cy="9" r="2" fill="#fff"/></svg>
</div>
</body>
</html>
```
FILE: styles.css
```css
* { box-sizing: border-box; }
body {
  margin: 0;
  height: 100vh;
  overflow: hidden;
  background: #fff;
  color: #676a6c;
  font: 13px/18px "Open Sans", "Noto Sans CJK SC", sans-serif;
}
a { color: inherit; text-decoration: none; }
button, select, input { font: inherit; color: inherit; }
button { cursor: pointer; }
.defs { position: absolute; width: 0; height: 0; }

.app { display: flex; height: 100%; }

/* primary navigation */
.sidebar {
  flex: none;
  width: 138px;
  overflow: hidden;
  background: #1e2c3c;
}
.logo { display: block; width: 70px; height: 70px; margin: 23px auto 25px 33px; }
.nav a {
  display: flex;
  align-items: center;
  height: 47px;
  padding-left: 8px;
  color: #a7b1c2;
  font-family: "Liberation Sans", "Noto Sans CJK SC", sans-serif;
  font-size: 14px;
  font-weight: 700;
}
.nav svg { flex: none; width: 16px; height: 14px; margin-right: 8px; }
.nav svg.fa { width: 14px; margin-right: 10px; }
.nav svg.wide { width: 17px; margin-right: 7px; }
.nav a.active { background: #ec6a17; color: #fff; border-radius: 3px; }

/* header */
.main { flex: 1; min-width: 0; display: flex; flex-direction: column; }
.topbar {
  flex: none;
  display: flex;
  align-items: center;
  justify-content: space-between;
  height: 48px;
  padding: 0 8px 4px 20px;
}
.topbar h1 { margin: 0; font-size: 15px; font-weight: 400; color: #4b4f55; }
.tools { display: flex; align-items: center; }
.lang {
  width: 120px;
  height: 24px;
  padding: 0;
  border: 1px solid #ccc;
  border-radius: 4px;
  background: #fff;
}
.msg {
  position: relative;
  margin: 0 24px 4px 20px;
  padding: 0 5px;
  border-radius: 2px;
  background: #1b92ff;
  color: #fff;
  font-size: 10px;
  font-weight: 700;
  line-height: 14px;
}
.msg::after {
  content: "";
  position: absolute;
  left: 4px;
  top: 14px;
  border: 3px solid transparent;
  border-top-color: #999c9e;
}
.logout { display: flex; align-items: center; gap: 9px; color: #999c9e; font-size: 14px; }
.logout svg { width: 17px; height: 17px; }

/* secondary navigation */
.workspace { flex: 1; min-height: 0; display: flex; }
.subnav { flex: none; width: 170px; border-top: 1px solid #e7e8eb; }
.subnav a { display: block; padding: 0 24px; font-size: 14px; line-height: 44px; }
.subnav a.active { background: #fff5ec; color: #e8682a; font-weight: 700; }
.gutter { flex: none; width: 15px; margin: 2px 0 19px 5px; background: #f5f6f8; }
.content {
  flex: 1;
  min-width: 0;
  overflow: hidden;
  padding-right: 36px;
  border-top: 2px solid #f6f6f7;
  background: #f5f6f8;
}

/* form */
.card { padding: 0 20px 40px; background: #fff; }
.row { display: grid; grid-template-columns: 15% 1fr; column-gap: 30px; margin-bottom: 20px; }
.row:last-child { margin-bottom: 0; }
.row-editor { margin-bottom: 30px; }
.label { padding-top: 6px; text-align: right; font-weight: 700; }
.field { position: relative; grid-column: 2; }
hr { height: 1px; margin: 0 0 20px; border: 0; border-top: 1px dashed #e7eaec; }
hr.tall { margin-top: 40px; }

.btn {
  height: 34px;
  padding: 0 12px;
  border: 1px solid;
  border-radius: 3px;
  color: #fff;
  font-size: 14px;
}
.btn-green { background: #5cb85c; border-color: #4cae4c; }
.btn-blue { background: #1b92ff; border-color: #1b92ff; }
.btn-gray { background: #c2c2c2; border-color: #c2c2c2; }
.actions { display: flex; gap: 4px; }
.pick-field { display: flex; align-items: flex-start; justify-content: space-between; width: 778px; }
.required { color: #c00; padding-top: 6px; }
.text {
  display: block;
  width: 59%;
  height: 34px;
  padding: 6px 12px;
  border: 1px solid #e5e6e7;
  border-radius: 1px;
}
.goods {
  width: 1000px;
  table-layout: fixed;
  border-collapse: collapse;
}
.goods th {
  height: 36px;
  padding: 0 8px 4px;
  border: 1px solid #e7e7e7;
  border-bottom-color: #ddd;
  background: #f5f5f6;
  text-align: left;
}
.w6 { width: 30%; }
.w4 { width: 20%; }
.w3 { width: 15%; }
.radios { display: flex; gap: 19px; height: 25px; align-items: center; padding-top: 5px; }
.radios label { display: flex; align-items: center; gap: 7px; }
.radios input { width: 13px; height: 13px; margin: 0; }

/* highlight frames */
.mark {
  position: absolute;
  border: 3px solid #ea261d;
  border-radius: 4px;
  pointer-events: none;
  z-index: 1;
}
.mark-pick { left: -22px; top: -11px; width: 144px; height: 53px; }
.mark-counts { left: -8px; top: -8px; width: 192px; height: 121px; }
.mark-state { left: -17px; top: -6px; width: 200px; height: 40px; }

/* rich text editor */
.editor {
  width: 739px;
  margin-left: 10px;
  border: 1px solid #d4d4d4;
  border-top: 0;
  border-radius: 0 0 4px 4px;
}
.toolbar {
  position: relative;
  padding: 3px 4px 3px;
  border-bottom: 1px solid #d4d4d4;
  background: linear-gradient(#fff, #efefef);
  box-shadow: 0 1px 4px rgba(0, 0, 0, .15);
  font-family: "Liberation Sans", "Noto Sans CJK SC", sans-serif;
  font-size: 12px;
}
.tb-row { display: flex; align-items: center; height: 24px; }
.toolbar button {
  flex: none;
  width: 22px;
  height: 22px;
  margin: 0 1px;
  padding: 0;
  border: 1px solid transparent;
  border-radius: 2px;
  background: none;
}
.toolbar button svg { display: block; width: 20px; height: 20px; }
.toolbar button.on { border-color: #dcac6c; background: #ffe69f; }
.toolbar button.off svg { opacity: .4; }
.toolbar button.last { margin-left: 7px; }
.toolbar button.split { position: relative; width: 32px; }
.split::after, .combo::after {
  content: "";
  position: absolute;
  right: 2px;
  top: 9px;
  border: 3px solid transparent;
  border-top-color: #000;
  border-bottom: 0;
}
.sep { flex: none; width: 1px; height: 18px; margin: 0 4px; background: #ccc; }
.combo { flex: none; position: relative; width: 75px; height: 22px; margin-right: 2px; }
.combo::after { right: 1px; }
.combo::before {
  content: "";
  position: absolute;
  right: 9px;
  top: 1px;
  height: 20px;
  border-left: 1px solid #ccc;
}
.combo select {
  appearance: none;
  display: block;
  width: 100%;
  height: 100%;
  padding: 0 13px 0 6px;
  border: 1px solid #ccc;
  border-radius: 2px;
  background: #fff;
  outline: 0;
}
.toolbar text { text-anchor: middle; fill: #333; }
.t-html { font: 700 8px "Liberation Sans", sans-serif; }
.toolbar .t-html { fill: #3c6e9e; }
.t-serif { font: 16px "Liberation Serif", serif; }
.t-serif.bold { font-weight: 700; }
.t-serif.italic { font-style: italic; }
.t-abc { font: 700 9px "Liberation Serif", serif; }
.t-sup { font: 700 9px "Liberation Sans", sans-serif; }
.toolbar .t-sup { fill: #3f74d4; }
.t-ab { font: 700 10px "Liberation Sans", sans-serif; }
.t-a { font: 700 13px "Liberation Serif", serif; }
.t-case { font: 12px "Liberation Sans", sans-serif; }
.t-help { font: 700 11px "Liberation Sans", sans-serif; }
.toolbar .t-help { fill: #fff; }

.editor-body { height: 320px; overflow: hidden; padding: 0 8px; color: #000; font-size: 16px; line-height: 48px; }
.doc { margin-top: -7px; }
.doc p { margin: 0 0 5px; }
.doc .indent { text-indent: 32px; }
.statusbar {
  display: flex;
  align-items: center;
  justify-content: space-between;
  height: 23px;
  padding-left: 3px;
  border-top: 1px solid #ccc;
  font-family: "Liberation Sans", "Noto Sans CJK SC", sans-serif;
  font-size: 12px;
}
.statusbar a { color: #00c; text-decoration: underline; }
.statusbar .count { color: #aaa; }

/* floating layers */
.scroll-thumb {
  position: fixed;
  right: 15px;
  top: 448px;
  bottom: 19px;
  width: 6px;
  background: #999;
}
.buy {
  position: fixed;
  right: 5px;
  top: 485px;
  display: flex;
  flex-direction: column;
  align-items: center;
  gap: 5px;
  width: 66px;
  height: 66px;
  padding-top: 10px;
  border-radius: 4px;
  background: #1b92ff;
  color: #fff;
  font-size: 12px;
}
.buy svg { width: 26px; height: 26px; }
.chat {
  position: fixed;
  right: 21px;
  bottom: -13px;
  display: flex;
  align-items: center;
  gap: 10px;
  width: 144px;
  height: 50px;
  padding-left: 15px;
  background: #fff;
  box-shadow: 0 0 60px rgba(0, 0, 0, .4);
  font-size: 16px;
}
.chat svg { width: 40px; height: 40px; }
.ime {
  position: fixed;
  right: 0;
  bottom: -20px;
  display: flex;
  align-items: flex-start;
  gap: 8px;
  width: 250px;
  height: 32px;
  padding: 5px 4px 0 13px;
  border-top: 1px solid #a9c8e0;
  background: #fff;
}
.ime svg { flex: none; width: 16px; height: 16px; }
.ime .ime-logo { position: absolute; left: -24px; top: -5px; width: 30px; height: 30px; }
.ime-lang { color: #0a6fd0; font-size: 16px; font-weight: 700; line-height: 18px; }
```
